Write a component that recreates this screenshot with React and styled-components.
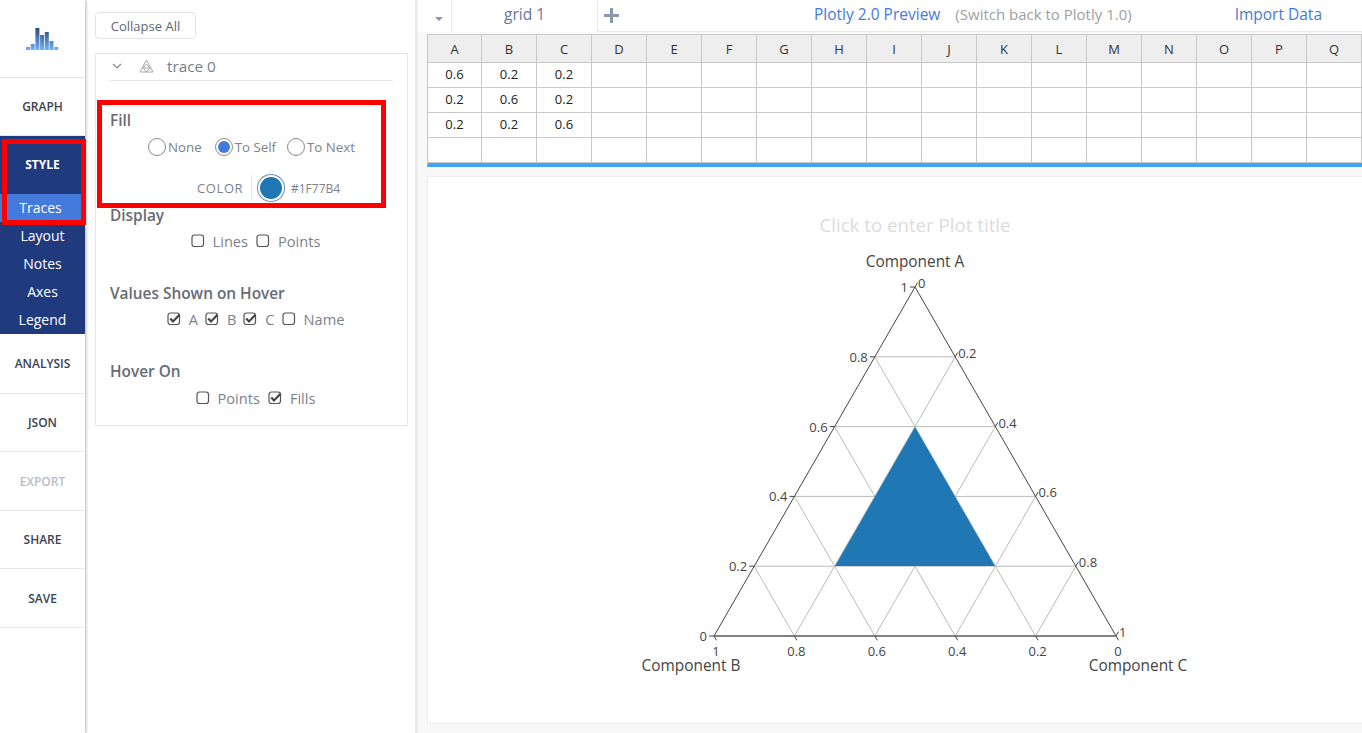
import React from 'react'
import styled, { createGlobalStyle } from 'styled-components'

const GlobalStyle = createGlobalStyle`
  html, body { margin: 0; padding: 0; background: #fff; }
  body { font-family: "Open Sans", "Liberation Sans", sans-serif; }
`

const Page = styled.div`
  position: relative;
  display: flex;
  width: 1362px;
  height: 733px;
  overflow: hidden;
  background: #fff;
`

const Sidebar = styled.nav`
  flex: 0 0 85px;
  width: 85px;
  box-shadow: 1px 0 3px rgba(0, 0, 0, 0.3);
  z-index: 1;
  background: #fff;
`

const LogoBox = styled.div`
  height: 78px;
  box-sizing: border-box;
  display: flex;
  align-items: center;
  justify-content: center;
  border-bottom: 1px solid #e6e6e6;
`

const NavItem = styled.div`
  height: ${p => p.$h || 58}px;
  box-sizing: border-box;
  display: flex;
  align-items: center;
  justify-content: center;
  font-size: 12px;
  font-weight: 600;
  color: ${p => (p.$muted ? '#b5bcc9' : '#3c4250')};
  border-bottom: 1px solid #e6e6e6;
`

const StyleBlock = styled.div`
  background: #1f3a7d;
  height: 198px;
`

const StyleHead = styled.div`
  height: 58px;
  box-sizing: border-box;
  padding-bottom: 2px;
  display: flex;
  align-items: center;
  justify-content: center;
  color: #fff;
  font-size: 12px;
  font-weight: 700;
`

const SubItem = styled.div`
  height: 28px;
  box-sizing: border-box;
  padding: 0 ${p => (p.$active ? 4 : 0)}px 1px 0;
  display: flex;
  align-items: center;
  justify-content: center;
  color: #fff;
  font-size: 14px;
  background: ${p => (p.$active ? '#447adb' : 'transparent')};
`

const PanelCol = styled.aside`
  flex: 0 0 333px;
  width: 333px;
  box-sizing: border-box;
  padding: 12px 0 0 10px;
  border-right: 3px solid #ececec;
`

const CollapseBtn = styled.div`
  width: 101px;
  height: 27px;
  box-sizing: border-box;
  display: flex;
  align-items: center;
  justify-content: center;
  border: 1px solid #e4e4e4;
  border-radius: 4px;
  font-size: 13px;
  color: #5f6672;
`

const Card = styled.div`
  margin-top: 14px;
  width: 313px;
  height: 373px;
  box-sizing: border-box;
  border: 1px solid #e6e6e6;
  padding: 0 14px;
`

const TraceHead = styled.div`
  height: 27px;
  box-sizing: border-box;
  display: flex;
  align-items: center;
  border-bottom: 1px solid #e6e6e6;
  font-size: 15.3px;
  color: #777d88;
  padding: 0 0 2px 2px;
  margin-bottom: 27px;
`

const TraceName = styled.span`
  margin-left: 13px;
`

const Heading = styled.div`
  height: 26px;
  line-height: 25px;
  font-size: 15.4px;
  font-weight: 600;
  color: #666b75;
  margin-top: ${p => p.$top || 0}px;
`

const OptionRow = styled.div`
  height: ${p => p.$h || 24}px;
  display: flex;
  align-items: center;
  justify-content: center;
  padding-left: ${p => p.$shift || 0}px;
  font-size: 14.6px;
  color: #7c828c;
`

const Radio = styled.span`
  width: 18px;
  height: 18px;
  box-sizing: border-box;
  border-radius: 50%;
  border: 1px solid #8c8c8c;
  background: #fff;
  margin: 0 2px 0 ${p => p.$gap || 0}px;
  display: flex;
  align-items: center;
  justify-content: center;
  &::after {
    content: '';
    width: 12px;
    height: 12px;
    border-radius: 50%;
    background: ${p => (p.$on ? '#447adb' : 'transparent')};
  }
`

const OptLabel = styled.span`
  font-size: 13.3px;
  color: #7c828c;
`

const CheckLabel = styled.span`
  margin-left: ${p => p.$left || 8}px;
  color: #7c828c;
`

const CheckIcon = styled.svg`
  flex: none;
  margin-left: ${p => p.$gap || 0}px;
`

const ColorRow = styled.div`
  height: 26px;
  margin-top: 15px;
  display: flex;
  align-items: center;
  padding-left: 87px;
`

const ColorName = styled.span`
  font-size: 13px;
  letter-spacing: 0.6px;
  color: #7c828c;
  width: 48px;
`

const Swatch = styled.span`
  margin-left: 6px;
  padding-left: 6px;
  border-left: 1px solid #e6e6e6;
  height: 26px;
  display: flex;
  align-items: center;
`

const SwatchDot = styled.span`
  width: 26px;
  height: 26px;
  box-sizing: border-box;
  border-radius: 50%;
  background: #1f77b4;
  border: 2px solid #fff;
  box-shadow: 0 0 0 1px #6d8fb0;
`

const Hex = styled.span`
  margin-left: 7px;
  font-size: 12px;
  color: #7c828c;
`

const Main = styled.main`
  flex: 1;
  min-width: 0;
  padding-left: 9px;
  background: #f8f8f8;
`

const TabBar = styled.div`
  height: 32px;
  display: flex;
  background: #fff;
  margin-left: -9px;
  padding-left: 9px;
`

const Caret = styled.div`
  width: 25px;
  height: 32px;
  box-sizing: border-box;
  display: flex;
  align-items: center;
  justify-content: center;
  border-right: 1px solid #e9e9e9;
  &::after {
    content: '';
    margin-top: 6px;
    border-left: 4px solid transparent;
    border-right: 4px solid transparent;
    border-top: 4px solid #8c96b3;
  }
`

const Tab = styled.div`
  width: 146px;
  height: 32px;
  box-sizing: border-box;
  text-align: center;
  font-size: 15.5px;
  line-height: 28px;
  color: #6677a0;
  border-right: 1px solid #e9e9e9;
`

const TabRest = styled.div`
  flex: 1;
  height: 32px;
  box-sizing: border-box;
  display: flex;
  align-items: center;
  padding-bottom: 3px;
  border-bottom: 1px solid #e9e9e9;
`

const Plus = styled.div`
  margin: 2px 0 0 6px;
  width: 15px;
  height: 15px;
  display: flex;
`

const PreviewLink = styled.span`
  margin-left: 195px;
  font-size: 15.5px;
  font-weight: 500;
  color: #447adb;
`

const SwitchLink = styled.span`
  margin-left: 15px;
  font-size: 15px;
  color: #a0a0a0;
`

const ImportLink = styled.span`
  margin-left: auto;
  margin-right: 40px;
  font-size: 15.5px;
  font-weight: 500;
  color: #447adb;
`

const Sheet = styled.div`
  margin-top: 2px;
  display: grid;
  grid-template-columns: 54px repeat(16, 55px);
  grid-auto-rows: 25px;
  border-top: 1px solid #c8c8c8;
  border-left: 1px solid #c8c8c8;
  box-sizing: border-box;
  height: 133px;
  background: #fff;
  border-bottom: 4px solid #41a5f5;
  overflow: hidden;
`

const HeadCell = styled.div`
  height: 28px;
  box-sizing: border-box;
  display: flex;
  align-items: center;
  justify-content: center;
  font-size: 13px;
  color: #333;
  background: #eee;
  border-right: 1px solid #c8c8c8;
  border-bottom: 1px solid #c8c8c8;
`

const Cell = styled.div`
  height: 25px;
  box-sizing: border-box;
  padding-bottom: 3px;
  margin-top: 3px;
  display: flex;
  align-items: center;
  justify-content: center;
  font-size: 13px;
  color: #222;
  border-right: 1px solid #c8c8c8;
  border-bottom: 1px solid #c8c8c8;
`

const PlotPanel = styled.section`
  margin-top: 9px;
  height: 548px;
  background: #fff;
  border-top: 1px solid #ececec;
  border-bottom: 1px solid #ececec;
  border-left: 1px solid #ececec;
  box-sizing: border-box;
`

const Chart = styled.svg`
  display: block;
  font-family: "Open Sans", "Liberation Sans", sans-serif;
`

const RedBox = styled.div`
  position: absolute;
  z-index: 2;
  left: ${p => p.$x}px;
  top: ${p => p.$y}px;
  width: ${p => p.$w}px;
  height: ${p => p.$h}px;
  box-sizing: border-box;
  border: 5px solid #f00;
  pointer-events: none;
`

function Logo() {
  const bars = [46, 43, 27, 34, 31, 40, 46]
  return (
    <svg width="33" height="22" viewBox="0 27 33 22">
      <defs>
        <linearGradient id="logoFade" x1="0" y1="27" x2="0" y2="49" gradientUnits="userSpaceOnUse">
          <stop offset="0" stopColor="#2a4a7d" />
          <stop offset="1" stopColor="#6fb0f5" />
        </linearGradient>
      </defs>
      {bars.map((y, i) => (
        <rect key={i} x={i * 4.7} y={y} width="4" height={49 - y} fill="url(#logoFade)" />
      ))}
    </svg>
  )
}

function Check({ on, gap }) {
  return (
    <CheckIcon $gap={gap} width="14" height="14" viewBox="0 0 14 14">
      <rect x="1" y="1" width="11.5" height="11.5" rx="2.5" fill="#fff" stroke="#555" strokeWidth="1.2" />
      {on && <path d="M3.2 6.5 L6 9.5 L12.5 2.8" fill="none" stroke="#444" strokeWidth="2.2" />}
    </CheckIcon>
  )
}

function TraceIcon() {
  return (
    <svg width="15" height="14" viewBox="0 0 15 14" style={{ marginLeft: 17 }}>
      <path d="M7.5 1 L14 13 L1 13 Z M4.2 9 H10.8 M7.5 5 L4.2 9 L7.5 13 L10.8 9 Z" fill="none" stroke="#a8a8a8" strokeWidth="1" />
    </svg>
  )
}

const columns = 'ABCDEFGHIJKLMNOPQ'.split('')
const rows = [
  ['0.6', '0.2', '0.2'],
  ['0.2', '0.6', '0.2'],
  ['0.2', '0.2', '0.6'],
  [],
]

// triangle corners, in page coordinates (the svg viewBox starts at the panel corner)
const top = [915, 287]
const left = [714, 636]
const right = [1116, 636]
const mix = (a, b, t) => [a[0] + (b[0] - a[0]) * t, a[1] + (b[1] - a[1]) * t]
const steps = [0.2, 0.4, 0.6, 0.8]

const aLabels = [['1', 0], ['0.8', 0.2], ['0.6', 0.4], ['0.4', 0.6], ['0.2', 0.8], ['0', 1]]
const cLabels = [['0', 0], ['0.2', 0.2], ['0.4', 0.4], ['0.6', 0.6], ['0.8', 0.8], ['1', 1]]
const bLabels = [['1', 0], ['0.8', 0.2], ['0.6', 0.4], ['0.4', 0.6], ['0.2', 0.8], ['0', 1]]

function Ternary() {
  return (
    <Chart width="934" height="546" viewBox="428 177 934 546">
      <text x="915" y="232" textAnchor="middle" fontSize="18.7" fill="#dcdcdc">Click to enter Plot title</text>
      <g stroke="#bbb" strokeWidth="1" fill="none">
        {steps.map(t => {
          const l = mix(top, left, t)
          const r = mix(top, right, t)
          const b = mix(left, right, t)
          const p = mix(left, top, t)
          const q = mix(right, top, 1 - t)
          return (
            <g key={t}>
              <line x1={l[0]} y1={l[1]} x2={r[0]} y2={r[1]} />
              <line x1={b[0]} y1={b[1]} x2={p[0]} y2={p[1]} />
              <line x1={b[0]} y1={b[1]} x2={q[0]} y2={q[1]} />
            </g>
          )
        })}
      </g>
      <polygon points="915,427 835,566 995,566" fill="#1f77b4" />
      <polygon points={`${top} ${right} ${left}`} fill="none" stroke="#444" strokeWidth="1" />
      <line x1={left[0]} y1={left[1]} x2={right[0]} y2={right[1]} stroke="#777" strokeWidth="1.5" />
      <g stroke="#444" strokeWidth="1">
        {aLabels.map(([, t]) => {
          const p = mix(top, left, t)
          return <line key={t} x1={p[0]} y1={p[1]} x2={p[0] - 5} y2={p[1]} />
        })}
        {cLabels.map(([, t]) => {
          const p = mix(top, right, t)
          return <line key={t} x1={p[0]} y1={p[1]} x2={p[0] + 2.5} y2={p[1] - 4.3} />
        })}
        {bLabels.map(([, t]) => {
          const p = mix(left, right, t)
          return <line key={t} x1={p[0]} y1={p[1]} x2={p[0] + 2.5} y2={p[1] + 4.3} />
        })}
      </g>
      <g fontSize="13" fill="#444">
        {aLabels.map(([s, t]) => {
          const p = mix(top, left, t)
          return <text key={t} x={p[0] - 7} y={p[1] + 5} textAnchor="end">{s}</text>
        })}
        {cLabels.map(([s, t]) => {
          const p = mix(top, right, t)
          return <text key={t} x={p[0] + 3} y={p[1] + 1} textAnchor="start">{s}</text>
        })}
        {bLabels.map(([s, t]) => {
          const p = mix(left, right, t)
          return <text key={t} x={p[0] + 2} y={p[1] + 20} textAnchor="middle">{s}</text>
        })}
      </g>
      <g fontSize="15.4" fill="#444" textAnchor="middle">
        <text x="915" y="267">Component A</text>
        <text x="691" y="671">Component B</text>
        <text x="1138" y="671">Component C</text>
      </g>
    </Chart>
  )
}

export default function App() {
  return (
    <Page>
      <GlobalStyle />
      <Sidebar>
        <LogoBox><Logo /></LogoBox>
        <NavItem>GRAPH</NavItem>
        <StyleBlock>
          <StyleHead>STYLE</StyleHead>
          <SubItem $active>Traces</SubItem>
          <SubItem>Layout</SubItem>
          <SubItem>Notes</SubItem>
          <SubItem>Axes</SubItem>
          <SubItem>Legend</SubItem>
        </StyleBlock>
        <NavItem $h={60}>ANALYSIS</NavItem>
        <NavItem>JSON</NavItem>
        <NavItem $h={59} $muted>EXPORT</NavItem>
        <NavItem>SHARE</NavItem>
        <NavItem $h={59}>SAVE</NavItem>
      </Sidebar>

      <PanelCol>
        <CollapseBtn>Collapse All</CollapseBtn>
        <Card>
          <TraceHead>
            <svg width="10" height="6" viewBox="0 0 10 6"><path d="M1 1 L5 5 L9 1" fill="none" stroke="#888" strokeWidth="1.2" /></svg>
            <TraceIcon />
            <TraceName>trace 0</TraceName>
          </TraceHead>

          <Heading>Fill</Heading>
          <OptionRow $h={26}>
            <Radio /><OptLabel>None</OptLabel>
            <Radio $gap={13} $on /><OptLabel>To Self</OptLabel>
            <Radio $gap={11} /><OptLabel>To Next</OptLabel>
          </OptionRow>
          <ColorRow>
            <ColorName>COLOR</ColorName>
            <Swatch><SwatchDot /></Swatch>
            <Hex>#1F77B4</Hex>
          </ColorRow>

          <Heading $top={2}>Display</Heading>
          <OptionRow $shift={8}>
            <Check /><CheckLabel>Lines</CheckLabel>
            <Check gap={8} /><CheckLabel>Points</CheckLabel>
          </OptionRow>

          <Heading $top={28}>Values Shown on Hover</Heading>
          <OptionRow $shift={8}>
            <Check on /><CheckLabel>A</CheckLabel>
            <Check on gap={7} /><CheckLabel>B</CheckLabel>
            <Check on gap={7} /><CheckLabel>C</CheckLabel>
            <Check gap={7} /><CheckLabel>Name</CheckLabel>
          </OptionRow>

          <Heading $top={28}>Hover On</Heading>
          <OptionRow $h={26} $shift={8}>
            <Check /><CheckLabel>Points</CheckLabel>
            <Check on gap={8} /><CheckLabel>Fills</CheckLabel>
          </OptionRow>
        </Card>
      </PanelCol>

      <Main>
        <TabBar>
          <Caret />
          <Tab>grid 1</Tab>
          <TabRest>
            <Plus>
              <svg width="15" height="15" viewBox="0 0 15 15"><path d="M7.5 0 V15 M0 7.5 H15" stroke="#8c96b3" strokeWidth="3" /></svg>
            </Plus>
            <PreviewLink>Plotly 2.0 Preview</PreviewLink>
            <SwitchLink>(Switch back to Plotly 1.0)</SwitchLink>
            <ImportLink>Import Data</ImportLink>
          </TabRest>
        </TabBar>
        <Sheet>
          {columns.map(c => <HeadCell key={c}>{c}</HeadCell>)}
          {rows.map((row, r) => columns.map((c, i) => <Cell key={c + r}>{row[i]}</Cell>))}
        </Sheet>
        <PlotPanel><Ternary /></PlotPanel>
      </Main>

      <RedBox $x={2} $y={139} $w={84} $h={86} />
      <RedBox $x={97} $y={100} $w={289} $h={108} />
    </Page>
  )
}
